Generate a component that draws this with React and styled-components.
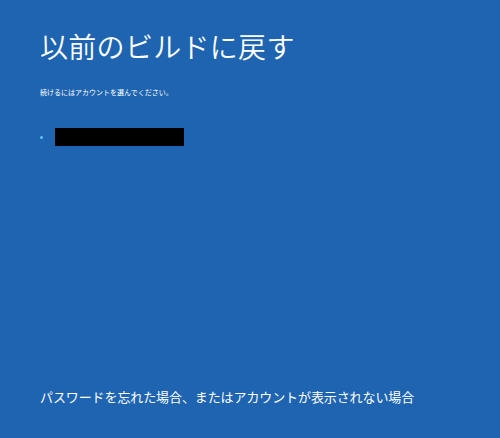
import React from "react";
import styled, { createGlobalStyle } from "styled-components";

const Global = createGlobalStyle`
  html, body { margin: 0; padding: 0; background: #1e64b0; }
  body { font-family: "Noto Sans CJK JP", "Noto Sans", sans-serif; }
`;

const Screen = styled.div`
  width: 500px;
  height: 438px;
  background: #1e64b0;
  color: #ffffff;
  box-sizing: border-box;
  padding: 25px 0 0 40px;
  display: flex;
  flex-direction: column;
`;

const Title = styled.h1`
  margin: 0;
  font-family: "Noto Sans CJK JP", sans-serif;
  font-weight: 350;
  font-size: 28px;
  line-height: 42px;
  letter-spacing: 0.3px;
`;

const Subtitle = styled.p`
  margin: 20px 0 0 0;
  font-size: 7px;
  line-height: 10px;
  letter-spacing: 0px;
`;

const AccountList = styled.ul`
  list-style: none;
  margin: 31px 0 0 0;
  padding: 0;
`;

const AccountRow = styled.li`
  display: flex;
  align-items: center;
  gap: 12px;
  height: 18px;
`;

const Dot = styled.span`
  width: 3px;
  height: 3px;
  border-radius: 50%;
  background: #58c6f5;
`;

const Redacted = styled.span`
  width: 129px;
  height: 18px;
  background: #000;
`;

const Spacer = styled.div`
  flex: 1;
`;

const FooterLink = styled.a`
  font-size: 13px;
  line-height: 18px;
  color: #ffffff;
  text-decoration: none;
  margin-bottom: 32px;
  letter-spacing: -0.1px;
`;

export default function App() {
  return (
    <>
      <Global />
      <Screen>
        <Title>以前のビルドに戻す</Title>
        <Subtitle>続けるにはアカウントを選んでください。</Subtitle>
        <AccountList>
          <AccountRow>
            <Dot />
            <Redacted />
          </AccountRow>
        </AccountList>
        <Spacer />
        <FooterLink href="#">パスワードを忘れた場合、またはアカウントが表示されない場合</FooterLink>
      </Screen>
    </>
  );
}
